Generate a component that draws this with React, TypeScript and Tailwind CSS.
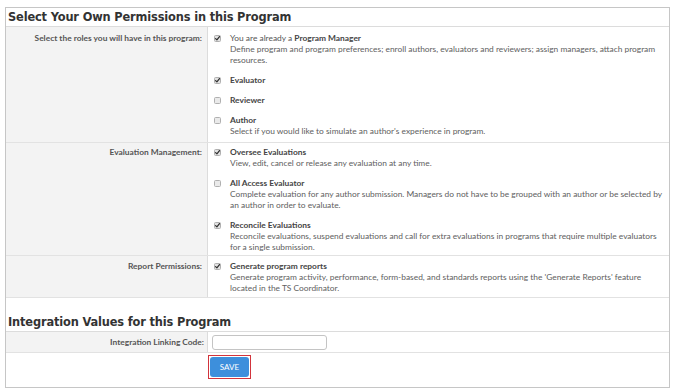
import React from "react";

function Box({ checked }: { checked: boolean }) {
  return (
    <svg width="7" height="7" viewBox="0 0 7 7" className="shrink-0 mt-[2px]">
      <rect x="0.5" y="0.5" width="6" height="6" rx="1" fill={checked ? "#e2e2e2" : "#eaeaea"} stroke="#b0b0b0" strokeWidth="1" />
      {checked && <path d="M1.6 3.6 L2.9 4.9 L5.5 1.6" stroke="#2f2f2f" strokeWidth="1.25" fill="none" strokeLinecap="round" strokeLinejoin="round" />}
    </svg>
  );
}

type Item = { checked: boolean; title: React.ReactNode; desc?: string };

function Items({ items }: { items: Item[] }) {
  return (
    <div className="flex flex-col gap-[9px]">
      {items.map((it, i) => (
        <div key={i} className="flex items-start gap-[9px]">
          <Box checked={it.checked} />
          <div className="flex-1 flex flex-col">
            <div className="text-[#444]">{it.title}</div>
            {it.desc && <div className="text-[#606060]">{it.desc}</div>}
          </div>
        </div>
      ))}
    </div>
  );
}

function Row({ label, children, pt, pb }: { label: string; children: React.ReactNode; pt: string; pb: string }) {
  return (
    <div className="flex border-b border-[#e2e2e2]">
      <div className={`w-[202px] shrink-0 bg-[#f3f3f3] border-r border-[#dcdcdc] pr-[5px] text-right font-bold text-[#555] ${pt}`}>{label}</div>
      <div className={`flex-1 pl-[6px] ${pt} ${pb}`}>{children}</div>
    </div>
  );
}

export default function App() {
  const heading = { fontFamily: '"DejaVu Sans", "Liberation Sans", sans-serif' };
  return (
    <div className="w-[676px] h-[392px] bg-white pt-[7px] pl-[5px]" style={{ fontFamily: 'Lato, "Liberation Sans", sans-serif' }}>
      <div className="w-[665px] h-[381px] border border-[#c6c6c6] flex flex-col text-[8.4px] leading-[11px]">
        <div className="h-[19px] pl-[2px] flex items-center font-bold text-[11.4px] tracking-[-0.15px] text-[#333] border-b border-[#dcdcdc]" style={heading}>
          Select Your Own Permissions in this Program
        </div>
        <Row label="Select the roles you will have in this program:" pt="pt-[5.5px]" pb="pb-[5px]">
          <Items
            items={[
              {
                checked: true,
                title: (
                  <span className="text-[#555]">
                    You are already a <span className="font-bold text-[#444]">Program Manager</span>
                  </span>
                ),
                desc: "Define program and program preferences; enroll authors, evaluators and reviewers; assign managers, attach program resources.",
              },
              { checked: true, title: <span className="font-bold">Evaluator</span> },
              { checked: false, title: <span className="font-bold">Reviewer</span> },
              { checked: false, title: <span className="font-bold">Author</span>, desc: "Select if you would like to simulate an author's experience in program." },
            ]}
          />
        </Row>
        <Row label="Evaluation Management:" pt="pt-[4px]" pb="pb-[2px]">
          <Items
            items={[
              { checked: true, title: <span className="font-bold">Oversee Evaluations</span>, desc: "View, edit, cancel or release any evaluation at any time." },
              {
                checked: false,
                title: <span className="font-bold">All Access Evaluator</span>,
                desc: "Complete evaluation for any author submission. Managers do not have to be grouped with an author or be selected by an author in order to evaluate.",
              },
              {
                checked: true,
                title: <span className="font-bold">Reconcile Evaluations</span>,
                desc: "Reconcile evaluations, suspend evaluations and call for extra evaluations in programs that require multiple evaluators for a single submission.",
              },
            ]}
          />
        </Row>
        <Row label="Report Permissions:" pt="pt-[5.5px]" pb="pb-[3px]">
          <Items
            items={[
              {
                checked: true,
                title: <span className="font-bold">Generate program reports</span>,
                desc: "Generate program activity, performance, form-based, and standards reports using the 'Generate Reports' feature located in the TS Coordinator.",
              },
            ]}
          />
        </Row>
        <div className="mt-[15px] h-[19px] pl-[2px] flex items-center font-bold text-[11.4px] tracking-[-0.15px] text-[#333] border-b border-[#dcdcdc]" style={heading}>
          Integration Values for this Program
        </div>
        <div className="flex border-b border-[#e2e2e2] h-[21px]">
          <div className="w-[202px] shrink-0 bg-[#f3f3f3] border-r border-[#dcdcdc] pr-[3px] flex items-center justify-end font-bold text-[#555]">
            Integration Linking Code:
          </div>
          <div className="flex-1 pl-[4px] pt-[3px]">
            <div className="w-[115px] h-[15px] rounded-[3px] border border-[#c4c4c4] bg-white" />
          </div>
        </div>
        <div className="pl-[202px] pt-[2px]">
          <div className="inline-flex border-[1.5px] border-[#d2343c] p-[1px]">
            <div className="w-[39px] h-[20px] rounded-[3px] bg-[#3d8fdc] text-white text-[8px] flex items-center justify-center">SAVE</div>
          </div>
        </div>
      </div>
    </div>
  );
}
